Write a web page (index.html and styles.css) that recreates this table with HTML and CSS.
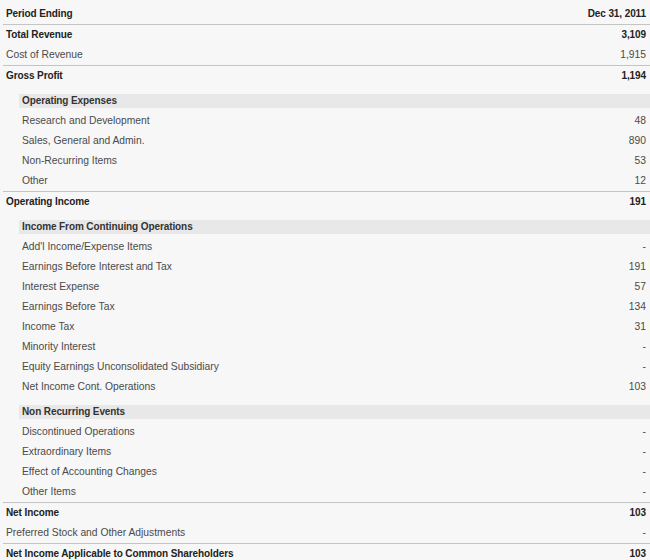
FILE: index.html
```html
<!DOCTYPE html>
<html lang="en">
<head>
    <meta charset="UTF-8">
    <title>Income Statement</title>
    <link rel="stylesheet" href="styles.css">
</head>
<body>
    <div class="statement">
        <div class="row head">
            <span>Period Ending</span>
            <span>Dec 31, 2011</span>
        </div>
        <div class="row total ruled">
            <span>Total Revenue</span>
            <span>3,109</span>
        </div>
        <div class="row">
            <span>Cost of Revenue</span>
            <span>1,915</span>
        </div>
        <div class="row total ruled">
            <span>Gross Profit</span>
            <span>1,194</span>
        </div>

        <!-- Operating Expenses -->
        <div class="group">
            <div class="group-title">Operating Expenses</div>
            <div class="row"><span>Research and Development</span><span>48</span></div>
            <div class="row"><span>Sales, General and Admin.</span><span>890</span></div>
            <div class="row"><span>Non-Recurring Items</span><span>53</span></div>
            <div class="row"><span>Other</span><span>12</span></div>
        </div>

        <div class="row total ruled">
            <span>Operating Income</span>
            <span>191</span>
        </div>

        <!-- Income From Continuing Operations -->
        <div class="group">
            <div class="group-title">Income From Continuing Operations</div>
            <div class="row"><span>Add'l Income/Expense Items</span><span>-</span></div>
            <div class="row"><span>Earnings Before Interest and Tax</span><span>191</span></div>
            <div class="row"><span>Interest Expense</span><span>57</span></div>
            <div class="row"><span>Earnings Before Tax</span><span>134</span></div>
            <div class="row"><span>Income Tax</span><span>31</span></div>
            <div class="row"><span>Minority Interest</span><span>-</span></div>
            <div class="row"><span>Equity Earnings Unconsolidated Subsidiary</span><span>-</span></div>
            <div class="row"><span>Net Income Cont. Operations</span><span>103</span></div>
        </div>

        <!-- Non Recurring Events -->
        <div class="group">
            <div class="group-title">Non Recurring Events</div>
            <div class="row"><span>Discontinued Operations</span><span>-</span></div>
            <div class="row"><span>Extraordinary Items</span><span>-</span></div>
            <div class="row"><span>Effect of Accounting Changes</span><span>-</span></div>
            <div class="row"><span>Other Items</span><span>-</span></div>
        </div>

        <div class="row total ruled">
            <span>Net Income</span>
            <span>103</span>
        </div>
        <div class="row">
            <span>Preferred Stock and Other Adjustments</span>
            <span>-</span>
        </div>
        <div class="row total ruled">
            <span>Net Income Applicable to Common Shareholders</span>
            <span>103</span>
        </div>
    </div>
</body>
</html>
```

FILE: styles.css
```css
* {
    margin: 0;
    padding: 0;
    box-sizing: border-box;
}

body {
    background-color: #f7f7f7;
    font-family: 'Liberation Sans', Arial, sans-serif;
    font-size: 10.3px;
    color: #4a4a4a;
}

.statement {
    margin: 4px 0 0 3px;
}

.row {
    display: flex;
    justify-content: space-between;
    align-items: center;
    height: 20px;
    padding: 0 4px 2px 3px;
    white-space: nowrap;
}

.row.ruled {
    height: 21px;
    border-top: 1px solid #c4c4c4;
}

.head,
.total,
.group-title {
    font-size: 10px;
    font-weight: bold;
    letter-spacing: -0.1px;
    color: #222;
}

.group {
    padding-left: 16px;
}

.group-title {
    height: 14px;
    line-height: 14px;
    margin: 8px 0 3px;
    padding-left: 3px;
    background: #e8e8e8;
    color: #333;
}
```
